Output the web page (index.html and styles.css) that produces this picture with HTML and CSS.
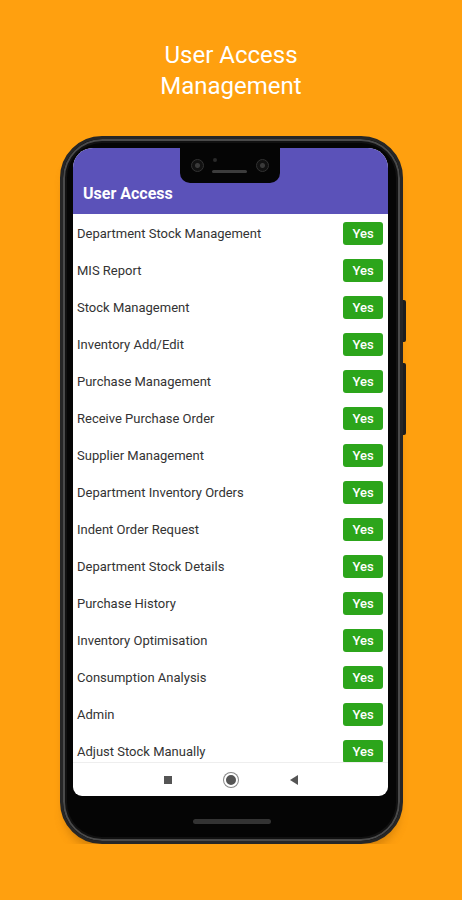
FILE: index.html
```html
<!DOCTYPE html>
<html lang="en">
  <head>
    <meta charset="UTF-8" />
    <meta name="viewport" content="width=device-width, initial-scale=1.0" />
    <link rel="stylesheet" href="styles.css">
    <title>User Access Management</title>
  </head>

  <body>
    <h1 class="pageTitle">User Access<br />Management</h1>

    <section class="phone">
      <span class="sideKey keyPower"></span>
      <span class="sideKey keyVolume"></span>
      <div class="screen">
        <div class="notch">
          <span class="lens"></span>
          <span class="dot"></span>
          <span class="speaker"></span>
          <span class="lens"></span>
        </div>
        <header class="appBar">User Access</header>
        <div class="accessList" id="accessList"></div>
        <nav class="navBar">
          <span class="navSquare"></span>
          <span class="navCircle"></span>
          <span class="navBack"></span>
        </nav>
      </div>
      <div class="homePill"></div>
    </section>

    <script>
      const permissions = [
        "Department Stock Management",
        "MIS Report",
        "Stock Management",
        "Inventory Add/Edit",
        "Purchase Management",
        "Receive Purchase Order",
        "Supplier Management",
        "Department Inventory Orders",
        "Indent Order Request",
        "Department Stock Details",
        "Purchase History",
        "Inventory Optimisation",
        "Consumption Analysis",
        "Admin",
        "Adjust Stock Manually"
      ];
      const accessList = document.getElementById("accessList");

      for (const name of permissions) {
        var row = document.createElement("div");
        row.classList.add("accessRow");

        var label = document.createElement("span");
        label.classList.add("accessName");
        label.innerText = name;

        var toggle = document.createElement("span");
        toggle.classList.add("yesButton");
        toggle.innerText = "Yes";

        row.appendChild(label);
        row.appendChild(toggle);
        accessList.appendChild(row);
      }
    </script>
  </body>
</html>
```

FILE: styles.css
```css
body {
  background-color: #ffa00f;
  font-family: Roboto, "Liberation Sans", sans-serif;
  margin: 0px;
  display: flex;
  flex-direction: column;
  align-items: center;
}
.pageTitle {
  color: white;
  font-family: Roboto, "Open Sans", sans-serif;
  font-weight: 400;
  font-size: 24px;
  line-height: 31px;
  text-align: center;
  margin: 40px 0px 34px;
}
.phone {
  position: relative;
  width: 343px;
  height: 708px;
  box-sizing: border-box;
  background-color: #050505;
  border-radius: 42px;
  border: 3px solid #262626;
  box-shadow: inset 0px 0px 0px 2px #4a4a4a, inset 0px 0px 0px 4px #111,
    0px 10px 10px -4px rgba(160, 90, 0, 0.45);
  margin-left: 1px;
}
.sideKey {
  position: absolute;
  right: -6px;
  width: 3px;
  background-color: #1d1d1d;
  border-radius: 0px 2px 2px 0px;
}
.keyPower {
  top: 161px;
  height: 42px;
}
.keyVolume {
  top: 224px;
  height: 72px;
}
.screen {
  position: relative;
  display: flex;
  flex-direction: column;
  height: 648px;
  margin: 9px 12px 0px 10px;
  background-color: white;
  border-radius: 20px 20px 9px 9px;
  overflow: hidden;
}
.notch {
  position: absolute;
  top: 0px;
  left: 107px;
  width: 100px;
  height: 35px;
  background-color: #050505;
  border-radius: 0px 0px 10px 10px;
  display: flex;
  align-items: center;
  justify-content: space-between;
  padding: 0px 11px;
  box-sizing: border-box;
}
.lens {
  width: 13px;
  height: 13px;
  border-radius: 50%;
  border: 1px solid #333;
  background: radial-gradient(circle, #3a3a3a 0 2px, #111 3px);
  box-sizing: border-box;
}
.dot {
  width: 4px;
  height: 4px;
  border-radius: 50%;
  background-color: #2a2a2a;
  margin: -12px -14px 0px 0px;
}
.speaker {
  width: 35px;
  height: 3px;
  border-radius: 2px;
  background-color: #3c3c3c;
  margin-top: 12px;
}
.appBar {
  background-color: #5b52b9;
  color: white;
  font-size: 16px;
  font-weight: 700;
  height: 66px;
  line-height: 44px;
  padding: 24px 10px 0px;
  box-sizing: border-box;
}
.accessList {
  flex: 1;
  overflow: hidden;
  padding: 1px 5px 0px 4px;
}
.accessRow {
  display: flex;
  align-items: center;
  justify-content: space-between;
  height: 37px;
}
.accessName {
  font-size: 13px;
  color: #333;
}
.yesButton {
  width: 40px;
  height: 23px;
  line-height: 23px;
  text-align: center;
  font-size: 13px;
  font-weight: 500;
  color: white;
  background-color: #2ca51b;
  border-radius: 3px;
}
.navBar {
  height: 33px;
  border-top: 1px solid #eee;
  display: flex;
  align-items: center;
  justify-content: center;
  gap: 52px;
}
.navSquare {
  width: 8px;
  height: 8px;
  background-color: #555;
}
.navCircle {
  width: 10px;
  height: 10px;
  border-radius: 50%;
  background-color: #555;
  border: 2px solid white;
  box-shadow: 0px 0px 0px 1px #888;
}
.navBack {
  width: 0px;
  height: 0px;
  border-top: 5px solid transparent;
  border-bottom: 5px solid transparent;
  border-right: 8px solid #555;
}
.homePill {
  width: 78px;
  height: 5px;
  margin: 23px auto 0px;
  border-radius: 3px;
  background-color: #333;
}
```
